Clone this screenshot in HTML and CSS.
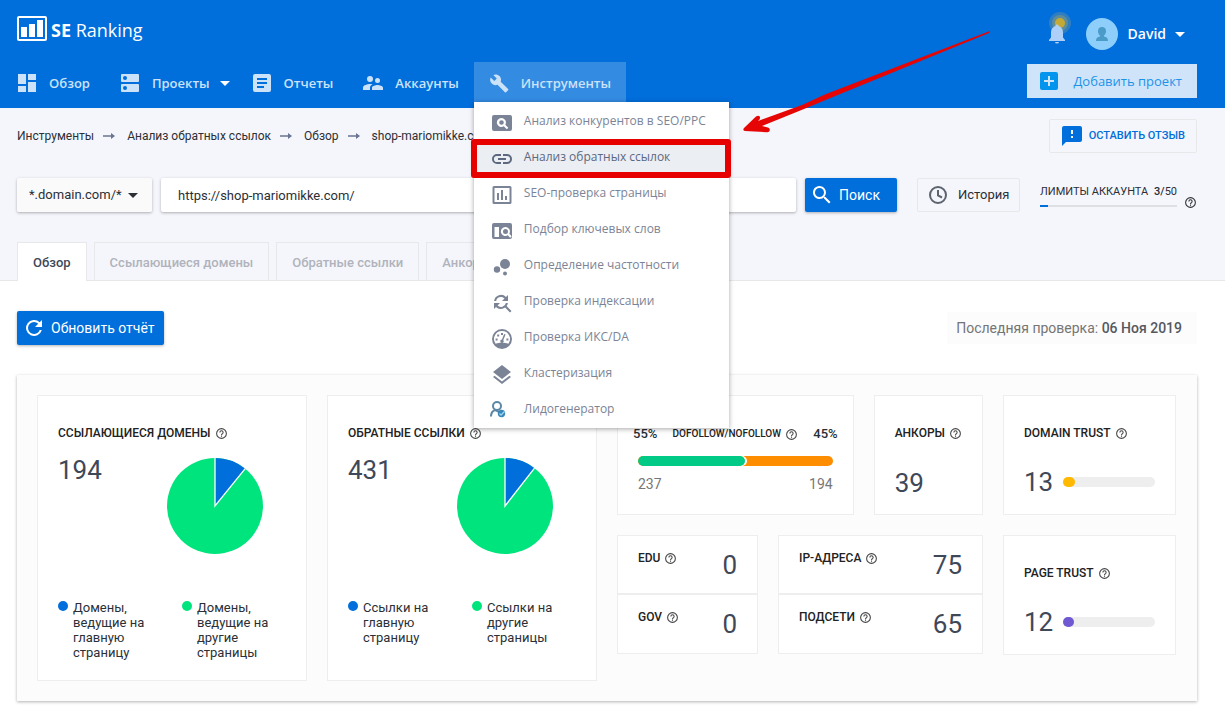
FILE: index.html
```html
<!DOCTYPE html>
<html lang="ru">
<head>
    <meta charset="UTF-8" />
    <meta name="viewport" content="width=device-width, initial-scale=1.0" />
    <title>SE Ranking</title>
    <link rel="stylesheet" href="styles.css">
</head>
<body>
    <svg class="sprite" aria-hidden="true">
        <symbol id="i-help" viewBox="0 0 24 24"><path d="M11 18h2v-2h-2v2zm1-16a10 10 0 1 0 0 20 10 10 0 0 0 0-20zm0 18a8 8 0 1 1 0-16 8 8 0 0 1 0 16zm0-14a4 4 0 0 0-4 4h2a2 2 0 1 1 4 0c0 2-3 1.750-3 5h2c0-2.250 3-2.500 3-5a4 4 0 0 0-4-4z"/></symbol>
        <symbol id="i-caret" viewBox="0 0 24 24"><path d="M7 10l5 5 5-5z"/></symbol>
        <symbol id="i-arrow" viewBox="0 0 12 8"><path d="M0 3.300h8V1l4 3-4 3V4.800H0z"/></symbol>
    </svg>

    <header class="header">
        <div class="header-top">
            <a class="logo" href="#">
                <svg viewBox="0 0 30 25" width="30" height="25">
                    <rect x="1" y="1" width="28" height="23" rx="1" fill="none" stroke="#fff" stroke-width="2"/>
                    <path fill="#fff" d="M4 11h6v10H4zM12 8h6v13h-6zM20 4h6v17h-6z"/>
                </svg>
                <span><b>SE</b> Ranking</span>
            </a>
            <div class="user">
                <button class="bell" aria-label="Уведомления">
                    <svg viewBox="0 0 28 34" width="28" height="34">
                        <circle cx="17" cy="11" r="11" fill="#6a93a0" opacity=".45"/>
                        <circle cx="17" cy="11" r="8" fill="#8d9c70" opacity=".5"/>
                        <circle cx="17" cy="11" r="5" fill="#c5a936"/>
                        <path fill="#aed0f8" d="M14 12.500c1 0 1.600.600 1.600 1.600 3 1 4.400 3.600 4.400 6.400v5l2 2.500v1H6v-1l2-2.500v-5c0-2.800 1.400-5.400 4.400-6.400 0-1 .600-1.600 1.600-1.600zM12 30h4a2 1.500 0 0 1-4 0z"/>
                    </svg>
                </button>
                <button class="account">
                    <span class="avatar">
                        <svg viewBox="0 0 12 14" width="12" height="14"><path fill="#4a9bc7" d="M6 0c2.500 0 4 1.500 4 4 0 2-.800 3.500-2 4.500v1c2.500.500 4 1.500 4 4.500H0c0-3 1.500-4 4-4.500v-1C2.800 7.500 2 6 2 4c0-2.500 1.500-4 4-4z"/></svg>
                    </span>
                    David
                    <svg class="caret"><use href="#i-caret"/></svg>
                </button>
            </div>
        </div>

        <div class="header-bottom">
            <nav class="nav">
                <a class="nav-item" href="#">
                    <svg viewBox="0 0 24 24"><path d="M3 13h8V3H3zm0 8h8v-6H3zm10 0h8V11h-8zm0-18v6h8V3z"/></svg>
                    Обзор
                </a>
                <a class="nav-item has-caret" href="#">
                    <svg viewBox="0 0 24 24"><path fill-rule="evenodd" d="M20 13H4a1 1 0 0 0-1 1v6a1 1 0 0 0 1 1h16a1 1 0 0 0 1-1v-6a1 1 0 0 0-1-1zM7 19a2 2 0 1 1 0-4 2 2 0 0 1 0 4zM20 3H4a1 1 0 0 0-1 1v6a1 1 0 0 0 1 1h16a1 1 0 0 0 1-1V4a1 1 0 0 0-1-1zM7 9a2 2 0 1 1 0-4 2 2 0 0 1 0 4z"/></svg>
                    Проекты
                    <svg class="caret"><use href="#i-caret"/></svg>
                </a>
                <a class="nav-item" href="#">
                    <svg viewBox="0 0 24 24"><path fill-rule="evenodd" d="M19 3H5a2 2 0 0 0-2 2v14a2 2 0 0 0 2 2h14a2 2 0 0 0 2-2V5a2 2 0 0 0-2-2zm-5 14H7v-2h7zm3-4H7v-2h10zm0-4H7V7h10z"/></svg>
                    Отчеты
                </a>
                <a class="nav-item" href="#">
                    <svg viewBox="0 0 24 24"><path d="M16.500 12a2.500 2.500 0 1 0 0-5 2.500 2.500 0 0 0 0 5zM9 11a3 3 0 1 0 0-6 3 3 0 0 0 0 6zm7.500 3c-1.830 0-5.500.920-5.500 2.750V19h11v-2.250c0-1.830-3.670-2.750-5.500-2.750zM9 13c-2.330 0-7 1.170-7 3.500V19h7v-2.250c0-.850.330-2.340 2.370-3.470C10.500 13.100 9.660 13 9 13z"/></svg>
                    Аккаунты
                </a>
                <div class="nav-group">
                    <a class="nav-item active" href="#">
                        <svg viewBox="0 0 24 24"><path d="M21.100 18.100l-7.400-7.400c.800-2 .300-4.200-1.200-5.700-1.700-1.700-4.200-2-6.200-1.100L9.800 7.400 7.300 9.900 3.700 6.400c-1 2-.600 4.500 1.100 6.200 1.500 1.500 3.800 2 5.700 1.200l7.400 7.400c.300.300.800.300 1.100 0l2.100-2c.400-.300.400-.800 0-1.100z"/></svg>
                        Инструменты
                    </a>
                    <div class="menu">
                        <a href="#">
                            <svg viewBox="0 0 24 24"><path fill-rule="evenodd" d="M4 4h16a2 2 0 0 1 2 2v12a2 2 0 0 1-2 2H4a2 2 0 0 1-2-2V6a2 2 0 0 1 2-2zm7.500 3a4.500 4.500 0 1 0 2.300 8.300l3 3 1.500-1.500-3-3A4.500 4.500 0 0 0 11.500 7zm0 2.200a2.300 2.300 0 1 1 0 4.600 2.300 2.300 0 0 1 0-4.600z"/></svg>
                            Анализ конкурентов в SEO/PPC
                        </a>
                        <a class="current" href="#">
                            <svg viewBox="0 0 24 24"><path d="M3.900 12A3.100 3.100 0 0 1 7 8.900h4V7H7a5 5 0 0 0 0 10h4v-1.900H7A3.100 3.100 0 0 1 3.900 12zM8 13h8v-2H8zm9-6h-4v1.900h4a3.100 3.100 0 0 1 0 6.200h-4V17h4a5 5 0 0 0 0-10z"/></svg>
                            Анализ обратных ссылок
                        </a>
                        <a href="#">
                            <svg viewBox="0 0 24 24"><path fill-rule="evenodd" d="M4 3h16a1.500 1.500 0 0 1 1.500 1.500v15A1.500 1.500 0 0 1 20 21H4a1.500 1.500 0 0 1-1.500-1.500v-15A1.500 1.500 0 0 1 4 3zm.500 2v14h15V5zM7 10h2v7H7zm4-3h2v10h-2zm4 6h2v4h-2z"/></svg>
                            SEO-проверка страницы
                        </a>
                        <a href="#">
                            <svg viewBox="0 0 24 24"><path fill-rule="evenodd" d="M4 4h16a2 2 0 0 1 2 2v12a2 2 0 0 1-2 2H4a2 2 0 0 1-2-2V6a2 2 0 0 1 2-2zm.500 4v10H9V8zM15.500 8a4.500 4.500 0 1 0 2.300 8.300l2.400 2.400 1.500-1.500-2.400-2.400A4.500 4.500 0 0 0 15.500 8zm0 2a2.500 2.500 0 1 1 0 5 2.500 2.500 0 0 1 0-5z"/></svg>
                            Подбор ключевых слов
                        </a>
                        <a href="#">
                            <svg viewBox="0 0 24 24"><circle cx="7" cy="14.500" r="3.200"/><circle cx="15" cy="9" r="5"/><circle cx="15" cy="18.500" r="2"/></svg>
                            Определение частотности
                        </a>
                        <a href="#">
                            <svg viewBox="0 0 24 24"><path d="M11 6c1.400 0 2.600.600 3.500 1.500L12 10h6V4l-2 2A7 7 0 0 0 4.100 10h2A5 5 0 0 1 11 6zm5.600 9.100A7 7 0 0 0 17.900 12h-2A5 5 0 0 1 7.500 14.500L10 12H4v6l2-2a7 7 0 0 0 9.100.600L20 21.500l1.500-1.500z"/></svg>
                            Проверка индексации
                        </a>
                        <a href="#">
                            <svg viewBox="0 0 24 24"><path fill-rule="evenodd" d="M12 2a10 10 0 1 1 0 20 10 10 0 0 1 0-20zm0 2a8 8 0 0 0-6.400 12.800C7.500 16 9.600 15.700 12 15.700s4.500.300 6.400 1.100A8 8 0 0 0 12 4z"/><path d="M14.200 7l1.400.500-2.300 5.600a1.700 1.700 0 1 1-1.400-.600zM11 6h2v2h-2zM7.200 7.600h2v2h-2zM5.600 11.500h2v2h-2zM16.400 11.500h2v2h-2z"/></svg>
                            Проверка ИКС/DA
                        </a>
                        <a href="#">
                            <svg viewBox="0 0 24 24"><path d="M12 18.500l-7.400-5.700L3 14l9 7 9-7-1.600-1.300zM12 16l9-7-9-7-9 7z"/></svg>
                            Кластеризация
                        </a>
                        <a href="#">
                            <svg viewBox="0 0 24 24"><g fill="none" stroke="#5c87a5" stroke-width="2"><circle cx="7" cy="7" r="4"/><path d="M1 17.500c0-3.500 1.500-5.500 4-6.500l4.500 2"/></g><circle cx="11.500" cy="14.500" r="3.700" fill="#3a86b8"/><path d="M9.500 14.500l1.500 1.500 3.500-3.500" fill="none" stroke="#9fd4ef" stroke-width="1.300"/></svg>
                            Лидогенератор
                        </a>
                    </div>
                </div>
            </nav>
            <button class="add-project">
                <svg viewBox="0 0 18 18" width="18" height="18"><rect width="18" height="18" rx="2" fill="#0395ee"/><path fill="#d0e4f9" d="M8 4h2v4h4v2h-4v4H8v-4H4V8h4z"/></svg>
                Добавить проект
            </button>
        </div>
    </header>

    <section class="toolbar">
        <div class="crumb-row">
            <nav class="crumbs" aria-label="Навигация">
                <a href="#">Инструменты</a>
                <svg><use href="#i-arrow"/></svg>
                <a href="#">Анализ обратных ссылок</a>
                <svg><use href="#i-arrow"/></svg>
                <a href="#">Обзор</a>
                <svg><use href="#i-arrow"/></svg>
                <span>shop-mariomikke.com</span>
            </nav>
            <button class="outline feedback">
                <svg viewBox="0 0 24 24" width="24" height="24"><path fill-rule="evenodd" d="M20 2H4a2 2 0 0 0-2 2v18l4-4h14a2 2 0 0 0 2-2V4a2 2 0 0 0-2-2zm-7 12h-2v-2h2zm0-4h-2V6h2z"/></svg>
                ОСТАВИТЬ ОТЗЫВ
            </button>
        </div>

        <form class="search-row">
            <div class="scope">
                <select aria-label="Область поиска">
                    <option>*.domain.com/*</option>
                </select>
                <svg class="caret"><use href="#i-caret"/></svg>
            </div>
            <input class="url" type="text" value="https://shop-mariomikke.com/" aria-label="Адрес сайта">
            <button class="primary search" type="button">
                <svg viewBox="0 0 24 24" width="24" height="24"><path d="M15.500 14h-.800l-.300-.300A6.500 6.500 0 1 0 13.700 14.400l.300.300v.800l5 5 1.500-1.500zm-6 0a4.500 4.500 0 1 1 0-9 4.500 4.500 0 0 1 0 9z"/></svg>
                Поиск
            </button>
            <button class="outline history" type="button">
                <svg viewBox="0 0 18 18" width="18" height="18"><g fill="none" stroke="#5d646e" stroke-width="2"><circle cx="9" cy="9" r="8"/><path d="M9 4v5.500l4 2"/></g></svg>
                История
            </button>
            <div class="limits">
                <div class="limits-body">
                    <div class="limits-text"><span>ЛИМИТЫ АККАУНТА</span><span><b>3/</b>50</span></div>
                    <div class="limits-bar"><i style="width: 6%"></i></div>
                </div>
                <svg class="help"><use href="#i-help"/></svg>
            </div>
        </form>

        <nav class="tabs">
            <a class="tab selected" href="#">Обзор</a>
            <a class="tab" href="#">Ссылающиеся домены</a>
            <a class="tab" href="#">Обратные ссылки</a>
            <a class="tab" href="#">Анкоры</a>
        </nav>
    </section>

    <main>
        <div class="report-head">
            <button class="primary refresh">
                <svg viewBox="0 0 24 24" width="24" height="24"><path d="M17.700 6.300A8 8 0 1 0 19.800 14h-2.100A6 6 0 1 1 12 6c1.700 0 3.100.700 4.200 1.800L13 11h7V4z"/></svg>
                Обновить отчёт
            </button>
            <p class="last-check">Последняя проверка: <b>06 Ноя 2019</b></p>
        </div>

        <div class="panel">
            <section class="card pie-card">
                <h2>ССЫЛАЮЩИЕСЯ ДОМЕНЫ <svg class="help"><use href="#i-help"/></svg></h2>
                <div class="pie-row">
                    <span class="value">194</span>
                    <svg viewBox="0 0 96 96" width="96" height="96">
                        <circle cx="48" cy="48" r="48" fill="#00e47d"/>
                        <path d="M48 48V0a48 48 0 0 1 30.200 10.700z" fill="#006edb"/>
                        <path d="M48 0v48l30.200-37.300" fill="none" stroke="#fff" stroke-width="1.300"/>
                    </svg>
                </div>
                <ul class="legend">
                    <li>Домены, ведущие на главную страницу</li>
                    <li class="green">Домены, ведущие на другие страницы</li>
                </ul>
            </section>

            <section class="card pie-card">
                <h2>ОБРАТНЫЕ ССЫЛКИ <svg class="help"><use href="#i-help"/></svg></h2>
                <div class="pie-row">
                    <span class="value">431</span>
                    <svg viewBox="0 0 96 96" width="96" height="96">
                        <circle cx="48" cy="48" r="48" fill="#00e47d"/>
                        <path d="M48 48V0a48 48 0 0 1 29.500 10.200z" fill="#006edb"/>
                        <path d="M48 0v48l29.500-37.800" fill="none" stroke="#fff" stroke-width="1.300"/>
                    </svg>
                </div>
                <ul class="legend">
                    <li>Ссылки на главную страницу</li>
                    <li class="green">Ссылки на другие страницы</li>
                </ul>
            </section>

            <div class="stats">
                <div class="stats-row top">
                    <section class="card follow">
                        <div class="follow-head">
                            <b>55%</b>
                            <h2>DOFOLLOW/NOFOLLOW <svg class="help"><use href="#i-help"/></svg></h2>
                            <b>45%</b>
                        </div>
                        <div class="follow-bar"><i style="width: 55%"></i></div>
                        <div class="follow-nums"><span>237</span><span>194</span></div>
                    </section>
                    <section class="card tall">
                        <h2>АНКОРЫ <svg class="help"><use href="#i-help"/></svg></h2>
                        <span class="value">39</span>
                    </section>
                </div>
                <div class="stats-row bottom">
                    <div class="pair">
                        <section class="card small"><h2>EDU <svg class="help"><use href="#i-help"/></svg></h2><span class="value">0</span></section>
                        <section class="card small"><h2>GOV <svg class="help"><use href="#i-help"/></svg></h2><span class="value">0</span></section>
                    </div>
                    <div class="pair">
                        <section class="card small"><h2>IP-АДРЕСА <svg class="help"><use href="#i-help"/></svg></h2><span class="value">75</span></section>
                        <section class="card small"><h2>ПОДСЕТИ <svg class="help"><use href="#i-help"/></svg></h2><span class="value">65</span></section>
                    </div>
                </div>
            </div>

            <div class="trust">
                <section class="card tall">
                    <h2>DOMAIN TRUST <svg class="help"><use href="#i-help"/></svg></h2>
                    <div class="trust-row"><span class="value">13</span><div class="track"><i class="yellow" style="width: 13%"></i></div></div>
                </section>
                <section class="card tall">
                    <h2>PAGE TRUST <svg class="help"><use href="#i-help"/></svg></h2>
                    <div class="trust-row"><span class="value">12</span><div class="track"><i class="violet" style="width: 12%"></i></div></div>
                </section>
            </div>
        </div>
    </main>

    <svg class="pointer" viewBox="0 0 248 104" width="248" height="104" aria-hidden="true">
        <path fill="#e60505" d="M247 1L246 3 85 69 61 79 19 96l6 1.500c3 1 2 5-1 4.700L2 101c-2-.500-2-2-1-3L13 86.500c3-2 5 0 3.500 3L15 91 59 75 83 64z"/>
    </svg>
</body>
</html>
```
FILE: styles.css
```css
* { box-sizing: border-box; }
body {
    margin: 0;
    background: #fff;
    color: #2b2f36;
    font: 13px/20px Roboto, Arial, sans-serif;
    position: relative;
}
a { color: inherit; text-decoration: none; }
button, input, select { font: inherit; color: inherit; border: 0; margin: 0; }
button {
    display: flex;
    align-items: center;
    padding: 0;
    background: none;
    white-space: nowrap;
    cursor: pointer;
}
svg { display: block; flex: none; fill: currentColor; }
h2, p, ul { margin: 0; padding: 0; }
.sprite { display: none; }
.caret { width: 24px; height: 24px; }
.help { width: 13px; height: 13px; }

/* Header */
.header {
    background: #006edb;
    color: #fff;
    font-family: "Open Sans", "Noto Sans", sans-serif;
    padding: 0 28px 6px 17px;
}
.header-top {
    display: flex;
    justify-content: space-between;
    height: 62px;
}
.logo {
    display: flex;
    gap: 4px;
    padding-top: 16px;
    font-size: 18px;
    line-height: 28px;
}
.user { display: flex; padding-top: 12px; }
.bell { align-self: flex-start; }
.account {
    margin-left: 15px;
    padding-right: 5px;
    height: 44px;
    font-weight: 600;
    font-size: 14px;
}
.account .caret { margin-left: 2px; }
.avatar {
    display: flex;
    align-items: center;
    justify-content: center;
    width: 32px;
    height: 32px;
    margin-right: 10px;
    border-radius: 50%;
    background: #8dcffa;
}
.header-bottom { display: flex; justify-content: space-between; }
.nav { display: flex; margin-left: -15px; }
.nav-item {
    display: flex;
    align-items: center;
    gap: 10px;
    height: 40px;
    padding: 2px 15px 0 13px;
    font-weight: 600;
    color: #cce2f8;
}
.nav-item svg { width: 24px; height: 24px; }
.nav-item .caret { margin-left: -7px; color: #fff; }
.has-caret { padding-right: 0; }
.nav-group { position: relative; }
.nav-item.active { background: #338be2; }
.menu {
    position: absolute;
    z-index: 2;
    top: 40px;
    left: 0;
    width: 255px;
    padding: 1px 0;
    background: #fff;
    box-shadow: 0 1px 5px rgba(0, 0, 0, 0.35);
    color: #7b8496;
    font-size: 12px;
}
.menu a {
    display: flex;
    align-items: center;
    gap: 10px;
    height: 36px;
    padding-left: 16px;
    white-space: nowrap;
    position: relative;
}
.menu svg { width: 24px; height: 24px; margin-top: 4px; }
.menu .current { background: #ebeef3; color: #5c6880; }
.menu .current::after {
    content: "";
    position: absolute;
    inset: 0 -2px -3px -3px;
    border: 6px solid #e60000;
    border-radius: 3px;
}
.add-project {
    gap: 15px;
    height: 34px;
    margin-top: 2px;
    padding: 0 15px 0 13px;
    background: #d0e4f9;
    color: #1c93e9;
}

/* Toolbar */
.toolbar {
    background: #f5f6fc;
    border-bottom: 1px solid #e8e8ea;
    padding: 11px 28px 0 17px;
}
.crumb-row {
    display: flex;
    align-items: center;
    justify-content: space-between;
}
.crumbs { display: flex; align-items: center; font-size: 12px; }
.crumbs svg { width: 12px; height: 8px; margin: 0 12px 0 9px; color: #6a7390; }
.outline {
    height: 34px;
    border: 1px solid #e8e8ea;
    border-radius: 2px;
}
.feedback {
    gap: 5px;
    padding: 0 11px 0 10px;
    color: #006edb;
    font-size: 11px;
    font-weight: 500;
}
.search-row { display: flex; align-items: center; margin-top: 25px; }
.scope {
    position: relative;
    width: 135px;
    box-shadow: 0 1px 3px rgba(0, 0, 0, 0.3);
    border-radius: 2px;
}
.scope select {
    appearance: none;
    display: block;
    width: 100%;
    height: 34px;
    padding: 0 12px;
    background: #fafafa;
    border-radius: 2px;
}
.scope .caret {
    position: absolute;
    top: 5px;
    right: 7px;
    pointer-events: none;
}
.url {
    flex: 1;
    min-width: 0;
    height: 34px;
    margin-left: 9px;
    padding: 0 17px;
    background: #fff;
    border-radius: 2px;
    box-shadow: 0 1px 3px rgba(0, 0, 0, 0.3);
}
.primary {
    height: 34px;
    background: #006edb;
    color: #fff;
    font-size: 14px;
    border-radius: 2px;
    box-shadow: 0 1px 3px rgba(0, 0, 0, 0.3);
}
.search { width: 92px; margin-left: 9px; padding-left: 5px; gap: 5px; }
.history { width: 103px; margin-left: 20px; padding-left: 11px; gap: 11px; }
.limits { display: flex; align-items: center; margin-left: 20px; gap: 7px; }
.limits-body { width: 137px; }
.limits-text {
    display: flex;
    justify-content: space-between;
    font-size: 11px;
    line-height: 16px;
}
.limits-text b { font-weight: 500; }
.limits-bar { height: 2px; margin-top: 5px; background: #dfe0e3; }
.limits-bar i { display: block; height: 100%; background: #006edb; }
.limits .help { margin-top: 15px; }
.tabs { display: flex; gap: 7px; margin-top: 30px; }
.tab {
    height: 38px;
    padding: 10px 15px 0;
    border: 1px solid #e8e8ea;
    border-bottom: 0;
    color: #b0b3bb;
    font-weight: 500;
    line-height: 20px;
}
.tab.selected {
    height: 39px;
    margin-bottom: -1px;
    background: #fff;
    color: #3f4858;
}

/* Report */
main { padding: 30px 28px 12px 17px; }
.report-head {
    display: flex;
    align-items: center;
    justify-content: space-between;
    margin-bottom: 30px;
}
.refresh { padding: 0 10px 0 5px; gap: 5px; }
.last-check {
    padding: 6px 15px 6px 9px;
    background: #fcfcfc;
    color: #757575;
    font-size: 14px;
}
.last-check b { color: #55585e; font-weight: 500; }
.panel {
    display: grid;
    grid-template-columns: 270fr 270fr 366fr 173fr;
    gap: 20px;
    padding: 20px 21px 20px 20px;
    background: #fcfcfc;
    box-shadow: 0 1px 3px rgba(0, 0, 0, 0.3);
}
.card { background: #fff; border: 1px solid #eee; padding: 0 20px; }
.card h2 {
    display: flex;
    align-items: center;
    gap: 4px;
    font-size: 12px;
    font-weight: 500;
    line-height: 20px;
    color: #222;
    white-space: nowrap;
}
.card .help { color: #444; }
.value { font-size: 26px; line-height: 24px; color: #3f4858; }
.pie-card { padding: 27px 20px 20px; min-height: 286px; }
.pie-row {
    display: flex;
    justify-content: space-between;
    margin-top: 15px;
    padding-right: 23px;
}
.legend {
    display: grid;
    grid-template-columns: 1fr 1fr;
    gap: 20px;
    margin-top: 46px;
    list-style: none;
    line-height: 15px;
}
.legend li { position: relative; padding: 0 15px; }
.legend li::before {
    content: "";
    position: absolute;
    left: 0;
    top: 1px;
    width: 10px;
    height: 10px;
    border-radius: 50%;
    background: #006edb;
}
.legend .green::before { background: #00e47d; }
.stats, .trust { display: flex; flex-direction: column; gap: 20px; }
.stats-row { display: grid; gap: 20px; height: 120px; }
.stats-row.top { grid-template-columns: 237fr 109fr; }
.stats-row.bottom { grid-template-columns: 141fr 205fr; }
.tall { height: 120px; padding-top: 27px; }
.tall .value { display: block; }
.tall > .value { margin-top: 28px; }
.trust-row { margin-top: 27px; }
.follow { padding-top: 28px; }
.follow-head {
    display: flex;
    justify-content: space-between;
    margin: 0 -5px;
}
.follow-head b { font-weight: 500; }
.follow-head h2 { font-size: 10px; }
.follow-bar {
    height: 10px;
    margin-top: 12px;
    border-radius: 5px;
    background: #ff8d00;
    overflow: hidden;
}
.follow-bar i {
    display: block;
    height: 10px;
    border-radius: 5px;
    background: #00ca85;
    box-shadow: 2px 0 0 #fff;
}
.follow-nums {
    display: flex;
    justify-content: space-between;
    margin-top: 8px;
    color: #777;
    font-size: 14px;
}
.small {
    display: flex;
    align-items: flex-start;
    justify-content: space-between;
    height: 60px;
    padding-top: 12px;
}
.small:first-child { border-bottom-width: 2px; }
.small + .small { margin-top: -1px; }
.small .value { margin-top: 5px; }
.trust-row { display: flex; align-items: center; gap: 10px; }
.track { flex: 1; height: 10px; border-radius: 5px; background: #eee; }
.track i { display: block; height: 10px; border-radius: 5px; }
.track .yellow { background: #ffb900; }
.track .violet { background: #6f58d2; }

/* Red arrow over the page, aimed at the current menu item */
.pointer {
    position: absolute;
    z-index: 3;
    top: 30px;
    left: 743px;
    pointer-events: none;
}
```
